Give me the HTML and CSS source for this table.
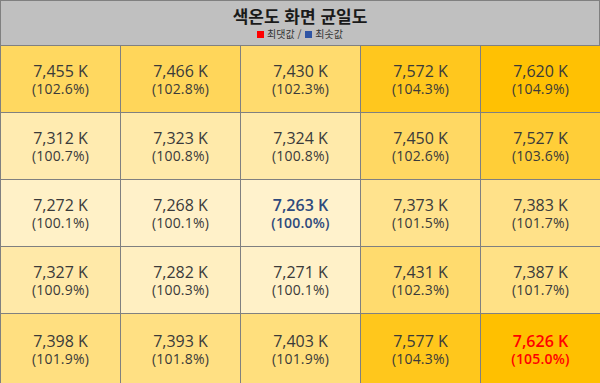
FILE: index.html
```html
<!DOCTYPE html>
<html lang="ko">
<head>
<meta charset="utf-8">
<link rel="stylesheet" href="styles.css">
</head>
<body>
<div class="board">
  <header class="head">
    <h1 class="title">색온도 화면 균일도</h1>
    <div class="legend"><span class="sw sw-max"></span><span>최댓값 /</span><span class="sw sw-min"></span><span>최솟값</span></div>
  </header>
  <div class="grid">
    <div class="cell" style="background:#ffd860"><span class="val">7,455 K</span><span class="pct">(102.6%)</span></div>
    <div class="cell" style="background:#ffd65a"><span class="val">7,466 K</span><span class="pct">(102.8%)</span></div>
    <div class="cell" style="background:#ffdb6e"><span class="val">7,430 K</span><span class="pct">(102.3%)</span></div>
    <div class="cell" style="background:#ffc71e"><span class="val">7,572 K</span><span class="pct">(104.3%)</span></div>
    <div class="cell" style="background:#ffc103"><span class="val">7,620 K</span><span class="pct">(104.9%)</span></div>

    <div class="cell" style="background:#ffebb0"><span class="val">7,312 K</span><span class="pct">(100.7%)</span></div>
    <div class="cell" style="background:#ffeaaa"><span class="val">7,323 K</span><span class="pct">(100.8%)</span></div>
    <div class="cell" style="background:#ffeaaa"><span class="val">7,324 K</span><span class="pct">(100.8%)</span></div>
    <div class="cell" style="background:#ffd863"><span class="val">7,450 K</span><span class="pct">(102.6%)</span></div>
    <div class="cell" style="background:#ffce38"><span class="val">7,527 K</span><span class="pct">(103.6%)</span></div>

    <div class="cell" style="background:#fff1c7"><span class="val">7,272 K</span><span class="pct">(100.1%)</span></div>
    <div class="cell" style="background:#fff1c9"><span class="val">7,268 K</span><span class="pct">(100.1%)</span></div>
    <div class="cell cell-min" style="background:#fff2cc"><span class="val">7,263 K</span><span class="pct">(100.0%)</span></div>
    <div class="cell" style="background:#ffe38e"><span class="val">7,373 K</span><span class="pct">(101.5%)</span></div>
    <div class="cell" style="background:#ffe189"><span class="val">7,383 K</span><span class="pct">(101.7%)</span></div>

    <div class="cell" style="background:#ffe9a8"><span class="val">7,327 K</span><span class="pct">(100.9%)</span></div>
    <div class="cell" style="background:#ffefc1"><span class="val">7,282 K</span><span class="pct">(100.3%)</span></div>
    <div class="cell" style="background:#fff1c8"><span class="val">7,271 K</span><span class="pct">(100.1%)</span></div>
    <div class="cell" style="background:#ffdb6e"><span class="val">7,431 K</span><span class="pct">(102.3%)</span></div>
    <div class="cell" style="background:#ffe186"><span class="val">7,387 K</span><span class="pct">(101.7%)</span></div>

    <div class="cell" style="background:#ffdf80"><span class="val">7,398 K</span><span class="pct">(101.9%)</span></div>
    <div class="cell" style="background:#ffe083"><span class="val">7,393 K</span><span class="pct">(101.8%)</span></div>
    <div class="cell" style="background:#ffdf7d"><span class="val">7,403 K</span><span class="pct">(101.9%)</span></div>
    <div class="cell" style="background:#ffc71c"><span class="val">7,577 K</span><span class="pct">(104.3%)</span></div>
    <div class="cell cell-max" style="background:#ffc000"><span class="val">7,626 K</span><span class="pct">(105.0%)</span></div>
  </div>
</div>
</body>
</html>
```

FILE: styles.css
```css
* { box-sizing: border-box; }

html, body {
  margin: 0;
  padding: 0;
  background: #ffffff;
}

.board {
  width: 600px;
  height: 383px;
  overflow: hidden;
  border-left: 1px solid #808080;
  border-top: 1px solid #808080;
  display: flex;
  flex-direction: column;
  font-family: "Open Sans", "Noto Sans CJK KR", sans-serif;
}

.head {
  height: 45px;
  flex: none;
  background: #c0c0c0;
  border-bottom: 1px solid #808080;
  border-right: 1px solid #808080;
  display: flex;
  flex-direction: column;
  align-items: center;
  padding-top: 5px;
}

.title {
  margin: 0;
  font-family: "Noto Sans CJK KR", sans-serif;
  font-weight: 700;
  font-size: 17px;
  line-height: 20px;
  color: #1a1a1a;
}

.legend {
  display: flex;
  align-items: center;
  gap: 3px;
  margin-top: 2px;
  font-family: "Noto Sans CJK KR", sans-serif;
  font-size: 10px;
  line-height: 12px;
  color: #333333;
}

.sw {
  width: 7px;
  height: 7px;
  display: inline-block;
}

.sw-max { background: #ff0000; }
.sw-min { background: #2f55a4; margin-left: 1px; }

.grid {
  flex: 1;
  display: grid;
  grid-template-columns: repeat(5, 119px);
  grid-template-rows: repeat(4, 66px) 1fr;
  gap: 1px;
  background: #808080;
}

.cell {
  display: flex;
  flex-direction: column;
  align-items: center;
  justify-content: center;
  color: #3a3a3a;
}

.val {
  font-size: 16px;
  line-height: 20px;
}

.pct {
  font-size: 14px;
  line-height: 16px;
  letter-spacing: 0.2px;
}

.cell-min { color: #2e4a7c; font-weight: 600; }
.cell-max { color: #ff0000; font-weight: 600; }
```
